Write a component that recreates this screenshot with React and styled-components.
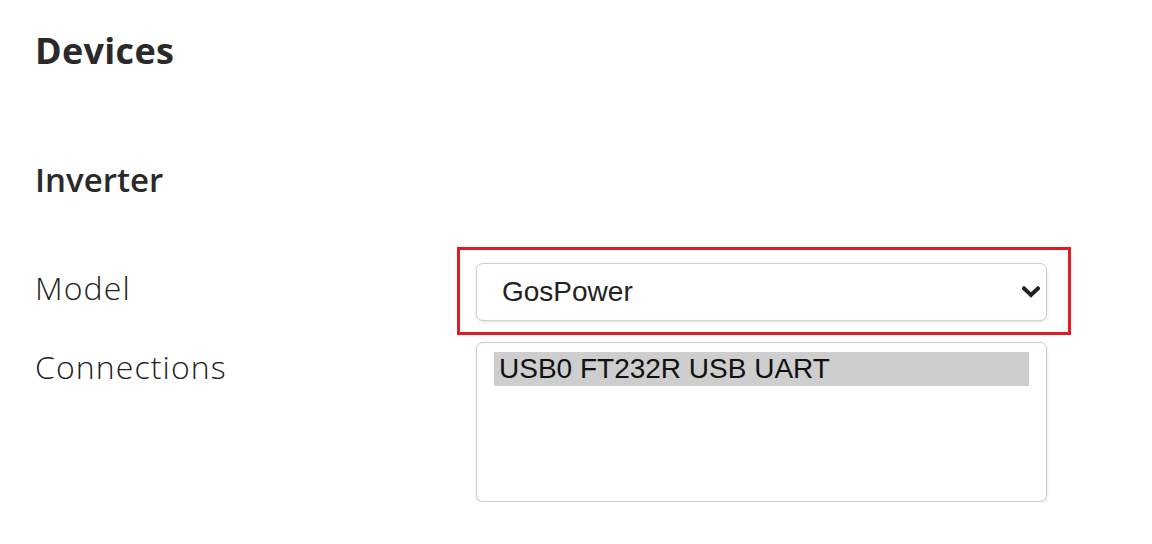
import React from "react";
import styled, { createGlobalStyle } from "styled-components";

const GlobalStyle = createGlobalStyle`
  html, body {
    margin: 0;
    padding: 0;
    background: #fff;
  }
  body {
    font-family: "Open Sans", "DejaVu Sans", sans-serif;
    color: #222;
  }
`;

const Page = styled.div`
  padding: 29px 0 0 35px;
  width: 1152px;
  box-sizing: border-box;
`;

const Title = styled.h1`
  margin: 0;
  font-size: 36px;
  line-height: 1.2;
  font-weight: 700;
  letter-spacing: 0.3px;
  color: #2a2a2a;
`;

const Section = styled.h2`
  margin: 88px 0 0;
  font-size: 33px;
  line-height: 1.2;
  font-weight: 600;
  color: #2a2a2a;
`;

const Form = styled.div`
  margin-top: 63px;
  display: grid;
  grid-template-columns: 441px 571px;
  row-gap: 21px;
`;

const Label = styled.label`
  padding-top: 6px;
  font-size: 32px;
  line-height: 1.2;
  font-weight: 300;
  letter-spacing: 1.1px;
  color: #222;
`;

const Highlighted = styled.div`
  position: relative;

  &::after {
    content: "";
    position: absolute;
    top: -16px;
    left: -19px;
    right: -24px;
    bottom: -14px;
    border: 3px solid #e31b23;
    pointer-events: none;
  }
`;

const SelectWrap = styled.div`
  position: relative;
  height: 58px;
`;

const Select = styled.select`
  appearance: none;
  width: 100%;
  height: 58px;
  box-sizing: border-box;
  margin: 0;
  padding: 0 56px 0 25px;
  border: 1px solid #cfcfcf;
  border-radius: 7px;
  background: #fff;
  box-shadow: 0 1px 3px rgba(0, 0, 0, 0.12);
  font-family: "Liberation Sans", Arial, sans-serif;
  font-size: 28px;
  color: #222;
  outline: none;
`;

const Chevron = styled.svg`
  position: absolute;
  right: 7px;
  top: 23px;
  width: 18px;
  height: 12px;
  pointer-events: none;
`;

const ListBox = styled.div`
  height: 160px;
  box-sizing: border-box;
  padding: 9px 17px;
  border: 1px solid #cfcfcf;
  border-radius: 7px;
  background: #fff;
  box-shadow: 0 1px 3px rgba(0, 0, 0, 0.12);
`;

const Option = styled.div`
  height: 34px;
  line-height: 34px;
  padding-left: 5px;
  font-family: "Liberation Sans", Arial, sans-serif;
  font-size: 28px;
  color: #111;
  background: ${p => (p.$selected ? "#cecece" : "transparent")};
  white-space: nowrap;
`;

export default function App() {
  return (
    <Page>
      <GlobalStyle />
      <Title>Devices</Title>
      <Section>Inverter</Section>
      <Form>
        <Label htmlFor="model">Model</Label>
        <Highlighted>
          <SelectWrap>
            <Select id="model" defaultValue="GosPower">
              <option>GosPower</option>
            </Select>
            <Chevron viewBox="0 0 18 12">
              <path
                d="M2 2.5 L9 9 L16 2.5"
                fill="none"
                stroke="#222"
                strokeWidth="4"
                strokeLinecap="square"
              />
            </Chevron>
          </SelectWrap>
        </Highlighted>
        <Label>Connections</Label>
        <ListBox>
          <Option $selected>USB0 FT232R USB UART</Option>
        </ListBox>
      </Form>
    </Page>
  );
}
